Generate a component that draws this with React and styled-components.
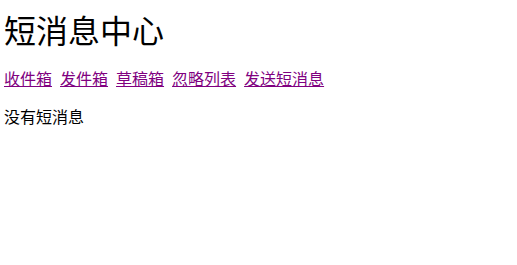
import React from "react";
import styled, { createGlobalStyle } from "styled-components";

const GlobalStyle = createGlobalStyle`
  body {
    margin: 0;
    background: #fff;
    font-family: "Noto Sans CJK SC", "Liberation Serif", serif;
  }
`;

const Page = styled.div`
  padding: 4px;
`;

const Title = styled.h1`
  margin: 5px 0 0;
  font-size: 32px;
  font-weight: normal;
  line-height: 40px;
  color: #000;
`;

const Nav = styled.nav`
  display: flex;
  gap: 8px;
  margin-top: 19px;
  font-size: 16px;
  line-height: 20px;
`;

const NavLink = styled.a`
  color: #800080;
  text-decoration: underline;
`;

const Empty = styled.p`
  margin: 18px 0 0;
  font-size: 16px;
  line-height: 20px;
  color: #000;
`;

const links = ["收件箱", "发件箱", "草稿箱", "忽略列表", "发送短消息"];

export default function App() {
  return (
    <Page>
      <GlobalStyle />
      <Title>短消息中心</Title>
      <Nav>
        {links.map((l) => (
          <NavLink key={l} href="#">
            {l}
          </NavLink>
        ))}
      </Nav>
      <Empty>没有短消息</Empty>
    </Page>
  );
}
